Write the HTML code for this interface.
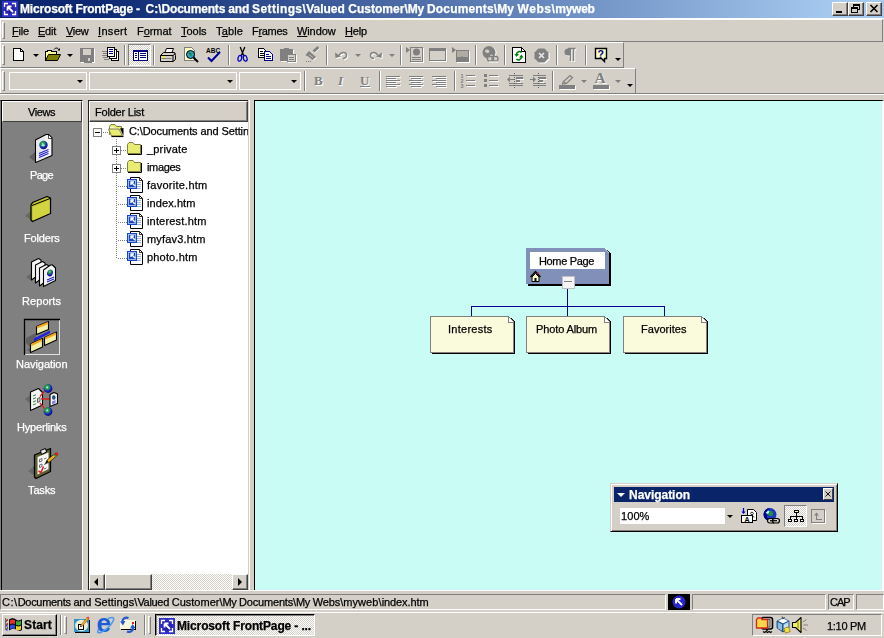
<!DOCTYPE html>
<html><head><meta charset="utf-8"><title>Microsoft FrontPage</title>
<style>
html,body{margin:0;padding:0;}
body{width:884px;height:638px;overflow:hidden;background:#d4d0c8;position:relative;font-family:"Liberation Sans",sans-serif;font-size:11px;color:#000;}
.a{position:absolute;box-sizing:border-box;}
.t{position:absolute;white-space:nowrap;line-height:14px;will-change:transform;-webkit-text-stroke:0.25px;}
svg{position:absolute;overflow:visible;}
#title{left:0;top:0;width:884px;height:18px;background:linear-gradient(to right,#0a246a 0%,#0e2a74 12%,#a6caf0 95%);}
.wb{position:absolute;top:2px;width:16px;height:14px;box-sizing:border-box;background:#d4d0c8;border:1px solid;border-color:#fff #404040 #404040 #fff;box-shadow:inset -1px -1px 0 #808080;}
.raised{border:1px solid;border-color:#fff #808080 #808080 #fff;}
.sunken{border:1px solid;border-color:#808080 #fff #fff #808080;}
.grip{position:absolute;width:3px;box-sizing:border-box;border:1px solid;border-color:#fff #808080 #808080 #fff;}
.sep{position:absolute;width:2px;box-sizing:border-box;border-left:1px solid #808080;border-right:1px solid #fff;}
.combo{position:absolute;box-sizing:border-box;border:1px solid #fff;background:#d4d0c8;}
.arr{position:absolute;width:0;height:0;border-left:3px solid transparent;border-right:3px solid transparent;border-top:3px solid #000;}
.arr.g{border-top-color:#808080;}
</style></head><body>
<!-- TITLE BAR -->
<div id="title" class="a"></div>
<svg style="left:2px;top:1px" width="16" height="16" viewBox="0 0 16 16"><rect x="0" y="0" width="16" height="16" fill="#3030c8"/><circle cx="8" cy="8" r="5" fill="#2424a8"/><path d="M2.500 6V2.500H6M10 2.500H13.500V6M13.500 10V13.500H10M6 13.500H2.500V10" fill="none" stroke="#fff" stroke-width="1.300"/><path d="M5.500 5.500h4M5.500 5.500v4M6 6L11 11" stroke="#fff" stroke-width="1.800" fill="none"/></svg>
<div class="a" style="left:0;top:18px;width:884px;height:1px;background:#fff"></div>
<div class="wb" style="left:832px"><div class="a" style="left:3px;top:8px;width:6px;height:2px;background:#000"></div></div>
<div class="wb" style="left:848px"><div class="a" style="left:4px;top:1px;width:7px;height:6px;border:1px solid #000;border-top-width:2px"></div><div class="a" style="left:2px;top:4px;width:7px;height:6px;border:1px solid #000;border-top-width:2px;background:#d4d0c8"></div></div>
<div class="wb" style="left:866px"><svg style="left:3px;top:2px" width="8" height="7" viewBox="0 0 8 7"><path d="M0.5 0L7.5 7M7.5 0L0.5 7" stroke="#000" stroke-width="1.6"/></svg></div>

<!-- MENU BAR -->
<div class="a raised" style="left:0;top:19px;width:883px;height:23px;"></div>
<div class="grip" style="left:2px;top:22px;height:17px"></div>

<!-- TOOLBAR 1 -->
<div class="a raised" style="left:0;top:42px;width:624px;height:26px;"></div>
<div class="grip" style="left:2px;top:45px;height:20px"></div>
<!-- new -->
<svg style="left:13px;top:48px" width="12" height="14" viewBox="0 0 12 14" shape-rendering="crispEdges"><path d="M0.5 0.5H7.500L10.500 3.500V12.500H0.5Z" fill="#fff" stroke="#000"/><path d="M7.500 0.5V3.500H10.500" fill="none" stroke="#000"/></svg>
<div class="arr" style="left:33px;top:54px"></div>
<!-- open -->
<svg style="left:45px;top:47px" width="17" height="15" viewBox="0 0 17 15"><path d="M9 2.5c1.5-2 4-2 5 0.5" fill="none" stroke="#000"/><path d="M12.5 3.5h2.5v-2.5z" fill="#000"/><path d="M0.5 13.5V4.5H2L3 3.5H6L7 4.5H11.5V7.5" fill="#ffff9c" stroke="#000" shape-rendering="crispEdges"/><path d="M0.5 13.5L3.5 7.5H15.5L12.5 13.5Z" fill="#808000" stroke="#000"/></svg>
<div class="arr" style="left:67px;top:54px"></div>
<!-- save (disabled) -->
<svg style="left:80px;top:48px" width="15" height="15" viewBox="0 0 15 15" shape-rendering="crispEdges"><rect x="1" y="1" width="14" height="14" fill="#fff"/><rect x="0" y="0" width="14" height="14" fill="#808080"/><rect x="3" y="1" width="8" height="6" fill="#d4d0c8"/><rect x="4" y="9" width="7" height="5" fill="#808080" stroke="#808080"/><rect x="8" y="10" width="2" height="3" fill="#d4d0c8"/></svg>
<!-- publish -->
<svg style="left:102px;top:47px" width="17" height="15" viewBox="0 0 17 15" shape-rendering="crispEdges"><path d="M0 4h5M1 6h4M0 8h5M1 10h5M2 12h5" stroke="#808080" fill="none"/><rect x="9.5" y="4.5" width="7" height="9" fill="#fff" stroke="#000"/><rect x="7.5" y="2.5" width="7" height="9" fill="#fff" stroke="#000"/><rect x="5.5" y="0.5" width="7" height="9" fill="#fff" stroke="#000"/><path d="M7 2.5h4M7 4.5h4M7 6.5h4" stroke="#0000a0"/></svg>
<div class="sep" style="left:124px;top:45px;height:20px"></div>
<!-- folder list (pressed) -->
<div class="a" style="left:128px;top:44px;width:23px;height:22px;border:1px solid;border-color:#808080 #fff #fff #808080;background-color:#fff;background-image:linear-gradient(45deg,#d4d0c8 25%,transparent 25%,transparent 75%,#d4d0c8 75%),linear-gradient(45deg,#d4d0c8 25%,transparent 25%,transparent 75%,#d4d0c8 75%);background-size:2px 2px;background-position:0 0,1px 1px;"></div>
<svg style="left:133px;top:50px" width="15" height="11" viewBox="0 0 15 11" shape-rendering="crispEdges"><rect x="0.5" y="0.5" width="14" height="10" fill="#fff" stroke="#000080"/><rect x="0" y="0" width="15" height="2" fill="#000080"/><path d="M2 3.5h2M2 5.5h2M2 7.5h2M7 3.5h6M7 5.5h6M7 7.5h6" stroke="#000080"/><path d="M5.5 2v8" stroke="#000080"/></svg>
<div class="sep" style="left:153px;top:45px;height:20px"></div>
<!-- print -->
<svg style="left:160px;top:48px" width="16" height="14" viewBox="0 0 16 14"><path d="M4.5 5.5L6.5 0.5H13.5L11.5 5.5Z" fill="#fff" stroke="#000"/><path d="M0.5 7.5L3.5 4.5H14.5L15.5 7.5V11.5L13 13.5H0.5Z" fill="#d4d0c8" stroke="#000"/><path d="M0.5 7.5H13L15.5 5.5M13 7.5V13.5" fill="none" stroke="#000"/><path d="M1.5 10.5h10" stroke="#808080"/><path d="M2 9h3" stroke="#ffff00"/></svg>
<!-- preview -->
<svg style="left:183px;top:47px" width="17" height="16" viewBox="0 0 17 16"><path d="M1.5 0.5H8.5L11.5 3.5V13.5H1.5Z" fill="#ffffcc" stroke="#808080" shape-rendering="crispEdges"/><circle cx="7.5" cy="7.5" r="4" fill="#30a0c0" stroke="#000"/><path d="M5 6c1-1 2-1 3 0s1 2 0 3" fill="#208040" stroke="none"/><path d="M10.5 10.5L15 15" stroke="#000" stroke-width="2"/></svg>
<!-- spell -->
<svg style="left:206px;top:47px" width="16" height="16" viewBox="0 0 16 16"><text x="0" y="6" font-family="Liberation Sans,sans-serif" font-size="6.5" font-weight="bold" fill="#000">ABC</text><path d="M2 10.5L5.5 14L14 5" fill="none" stroke="#0000a0" stroke-width="2"/></svg>
<div class="sep" style="left:228px;top:45px;height:20px"></div>
<!-- cut -->
<svg style="left:237px;top:47px" width="11" height="15" viewBox="0 0 11 15"><path d="M3.200 0L6.800 9M7.800 0L4.200 9" stroke="#000" stroke-width="1.300"/><ellipse cx="2.800" cy="11.300" rx="1.800" ry="2.900" fill="none" stroke="#0000c0" stroke-width="1.300" transform="rotate(15 2.800 11.300)"/><ellipse cx="8.200" cy="11.300" rx="1.800" ry="2.900" fill="none" stroke="#0000c0" stroke-width="1.300" transform="rotate(-15 8.200 11.300)"/></svg>
<!-- copy -->
<svg style="left:258px;top:48px" width="16" height="13" viewBox="0 0 16 13" shape-rendering="crispEdges"><path d="M0.500 0.500H5.500L8.500 3.500V9.500H0.500Z" fill="#fff" stroke="#000"/><path d="M2 3.500h3M2 5.500h5M2 7.500h5" stroke="#000"/><path d="M6.500 3.500H11.500L14.500 6.500V12.500H6.500Z" fill="#fff" stroke="#000080"/><path d="M8 6.500h3M8 8.500h5M8 10.500h5" stroke="#000080"/></svg>
<!-- paste disabled -->
<svg style="left:280px;top:48px" width="17" height="15" viewBox="0 0 17 15" shape-rendering="crispEdges"><rect x="1" y="2" width="13" height="12" fill="#fff"/><rect x="0" y="1" width="13" height="12" fill="#808080"/><rect x="4" y="0" width="5" height="3" fill="#808080"/><rect x="7.500" y="6.500" width="8" height="7" fill="#d4d0c8" stroke="#808080"/><path d="M9 9.500h5M9 11.500h5" stroke="#808080"/><path d="M8 14.500h9M16.500 7v8" stroke="#fff"/></svg>
<!-- format painter disabled -->
<svg style="left:304px;top:46px" width="17" height="17" viewBox="0 0 17 17"><path d="M10 6L15 1.500" stroke="#fff" stroke-width="3"/><path d="M9.500 5.500L14.500 1" stroke="#808080" stroke-width="3"/><path d="M5 5L12 11L8.500 14L1.500 9Z" fill="#808080"/><path d="M3 10L7 13M5 8.500L9 11.500" stroke="#d4d0c8" stroke-width="0.800"/><path d="M2 15.500h1M4 15.500h1M6 15.500h1" stroke="#808080"/><path d="M12.500 11.500L9 14.500" stroke="#fff"/></svg>
<div class="sep" style="left:326px;top:45px;height:20px"></div>
<!-- undo disabled -->
<svg style="left:335px;top:50px" width="14" height="10" viewBox="0 0 14 10"><path d="M4 5.500C6 1.500 11 1.500 11.500 5C12 7 10 8.500 8 8.500" fill="none" stroke="#fff" stroke-width="1.500" transform="translate(1,1)"/><path d="M0 2.500L0.500 8L6 6.500Z" fill="#fff" transform="translate(1,1)"/><path d="M4 5.500C6 1.500 11 1.500 11.500 5C12 7 10 8.500 8 8.500" fill="none" stroke="#808080" stroke-width="1.500"/><path d="M0 2.500L0.500 8L6 6.500Z" fill="#808080"/></svg>
<div class="arr g" style="left:355px;top:54px"></div>
<!-- redo disabled -->
<svg style="left:368px;top:50px" width="14" height="10" viewBox="0 0 14 10"><g transform="translate(14,0) scale(-1,1)"><path d="M4 5.500C6 1.500 11 1.500 11.500 5C12 7 10 8.500 8 8.500" fill="none" stroke="#fff" stroke-width="1.500" transform="translate(-1,1)"/><path d="M0 2.500L0.500 8L6 6.500Z" fill="#fff" transform="translate(-1,1)"/><path d="M4 5.500C6 1.500 11 1.500 11.500 5C12 7 10 8.500 8 8.500" fill="none" stroke="#808080" stroke-width="1.500"/><path d="M0 2.500L0.500 8L6 6.500Z" fill="#808080"/></g></svg>
<div class="arr g" style="left:389px;top:54px"></div>
<div class="sep" style="left:400px;top:45px;height:20px"></div>
<!-- component disabled -->
<svg style="left:406px;top:47px" width="18" height="16" viewBox="0 0 18 16" shape-rendering="crispEdges"><path d="M0 0v6l4-3z" fill="#808080" shape-rendering="auto"/><rect x="4.500" y="0.500" width="12" height="14" fill="#d4d0c8" stroke="#808080"/><path d="M5 15.500h13M17.500 1v15" stroke="#fff"/><circle cx="10.500" cy="5" r="3.500" fill="#808080" shape-rendering="auto"/><path d="M6 10.500h9M6 12.500h9" stroke="#808080"/></svg>
<!-- frame disabled -->
<svg style="left:429px;top:48px" width="18" height="14" viewBox="0 0 18 14" shape-rendering="crispEdges"><rect x="1.500" y="1.500" width="16" height="12" fill="none" stroke="#fff"/><rect x="0.500" y="0.500" width="16" height="12" fill="#d4d0c8" stroke="#808080"/><rect x="0" y="0" width="17" height="3" fill="#808080"/></svg>
<!-- picture disabled -->
<svg style="left:452px;top:47px" width="18" height="16" viewBox="0 0 18 16" shape-rendering="crispEdges"><path d="M0 0v6l4-3z" fill="#808080" shape-rendering="auto"/><rect x="5" y="4" width="13" height="12" fill="#fff"/><rect x="4" y="3" width="13" height="12" fill="#808080"/><rect x="5" y="4" width="11" height="6" fill="#b0aca4"/><path d="M5 14l5-5 3 3 2-1.500 2 2V15H5z" fill="#808080" shape-rendering="auto"/></svg>
<div class="sep" style="left:475px;top:45px;height:20px"></div>
<!-- hyperlink disabled -->
<svg style="left:482px;top:46px" width="17" height="17" viewBox="0 0 17 17"><circle cx="8" cy="7" r="6.500" fill="#fff"/><circle cx="7" cy="6.500" r="6.500" fill="#808080"/><path d="M3 4.500c1.500-1.500 3-1 4 0s0 2.500-1.500 2.500S3 6 3 4.500M8 9c1.500-1 3-0.500 3 1s-2 2-3 1z" fill="#d4d0c8"/><rect x="5.500" y="10.500" width="6" height="4.500" rx="2" fill="#d4d0c8" stroke="#808080" stroke-width="1.300"/><rect x="10" y="10.500" width="6" height="4.500" rx="2" fill="none" stroke="#808080" stroke-width="1.300"/><path d="M7 16h9" stroke="#fff"/></svg>
<div class="sep" style="left:504px;top:45px;height:20px"></div>
<!-- refresh -->
<svg style="left:512px;top:47px" width="14" height="16" viewBox="0 0 14 16"><path d="M0.500 0.500H9.500L13.500 4.500V15.500H0.500Z" fill="#fff" stroke="#000" shape-rendering="crispEdges"/><path d="M9.500 0.500V4.500H13.500" fill="none" stroke="#000" shape-rendering="crispEdges"/><path d="M9.500 5.500A3 3.500 0 0 0 4.500 7.500" fill="none" stroke="#008000" stroke-width="1.600"/><path d="M2.500 7L4.500 10L7 7Z" fill="#008000"/><path d="M4.500 12A3 3.500 0 0 0 9.500 10" fill="none" stroke="#008000" stroke-width="1.600"/><path d="M11.500 10.500L9.500 7.500L7 10.500Z" fill="#008000"/></svg>
<!-- stop disabled -->
<svg style="left:534px;top:48px" width="17" height="16" viewBox="0 0 17 16"><path d="M5.500 1.500H11.500L15.500 5.500V11.500L11.500 15.500H5.500L1.500 11.500V5.500Z" fill="#fff"/><path d="M4.500 0.500H10.500L14.500 4.500V10.500L10.500 14.500H4.500L0.500 10.500V4.500Z" fill="#808080"/><path d="M5 5l5 5M10 5l-5 5" stroke="#e8e8e8" stroke-width="1.600"/></svg>
<div class="sep" style="left:556px;top:45px;height:20px"></div>
<!-- paragraph disabled -->
<svg style="left:564px;top:48px" width="13" height="14" viewBox="0 0 13 14"><g transform="translate(1,1)"><path d="M7 0.500H4A3.500 3.500 0 0 0 4 7.500H7Z" fill="#fff"/><path d="M6.500 0v13M9.500 0v13M4 0.500h7.500" stroke="#fff" stroke-width="1.400" fill="none"/></g><path d="M7 0.500H4A3.500 3.500 0 0 0 4 7.500H7Z" fill="#808080"/><path d="M6.500 0v13M9.500 0v13M4 0.500h7.500" stroke="#808080" stroke-width="1.400" fill="none"/></svg>
<div class="sep" style="left:585px;top:45px;height:20px"></div>
<!-- help -->
<svg style="left:594px;top:47px" width="14" height="16" viewBox="0 0 14 16"><path d="M1.500 1.500H12.500V11.500H10.500V14.500L7.500 11.500H1.500Z" fill="#ffffcc" stroke="#000" stroke-width="1.400"/><text x="3.500" y="10.500" font-family="Liberation Sans,sans-serif" font-size="10.500" font-weight="bold" fill="#000080">?</text></svg>
<div class="arr" style="left:615px;top:58px"></div>

<!-- TOOLBAR 2 -->
<div class="a raised" style="left:0;top:68px;width:636px;height:26px;"></div>
<div class="grip" style="left:2px;top:71px;height:20px"></div>
<div class="combo" style="left:9px;top:72px;width:78px;height:18px"></div><div class="arr" style="left:77px;top:80px"></div>
<div class="combo" style="left:89px;top:72px;width:148px;height:18px"></div><div class="arr" style="left:227px;top:80px"></div>
<div class="combo" style="left:239px;top:72px;width:62px;height:18px"></div><div class="arr" style="left:291px;top:80px"></div>
<div class="sep" style="left:304px;top:71px;height:20px"></div>
<svg style="left:312px;top:72px" width="64" height="18" viewBox="0 0 64 18">
<g font-family="Liberation Serif,serif" font-size="13" font-weight="bold">
<text x="3" y="14" fill="#fff">B</text><text x="2" y="13" fill="#808080">B</text>
<text x="27" y="14" fill="#fff" font-style="italic">I</text><text x="26" y="13" fill="#808080" font-style="italic">I</text>
<text x="49" y="14" fill="#fff">U</text><text x="48" y="13" fill="#808080">U</text>
</g><path d="M49 15.500h10" stroke="#fff"/><path d="M48 14.500h10" stroke="#808080"/></svg>
<div class="sep" style="left:379px;top:71px;height:20px"></div>
<svg style="left:386px;top:75px" width="62" height="13" viewBox="0 0 62 13" shape-rendering="crispEdges">
<path d="M1 2.500h14M1 4.500h10M1 6.500h14M1 8.500h10M1 10.500h14M1 12.500h10" stroke="#fff" transform="translate(0,0)"/>
<path d="M0 1.500h14M0 3.500h10M0 5.500h14M0 7.500h10M0 9.500h14M0 11.500h10" stroke="#808080"/>
<path d="M24 2.500h14M26 4.500h10M24 6.500h14M26 8.500h10M24 10.500h14M26 12.500h10" stroke="#fff"/>
<path d="M23 1.500h14M25 3.500h10M23 5.500h14M25 7.500h10M23 9.500h14M25 11.500h10" stroke="#808080"/>
<path d="M47 2.500h14M51 4.500h10M47 6.500h14M51 8.500h10M47 10.500h14M51 12.500h10" stroke="#fff"/>
<path d="M46 1.500h14M50 3.500h10M46 5.500h14M50 7.500h10M46 9.500h14M50 11.500h10" stroke="#808080"/>
</svg>
<div class="sep" style="left:454px;top:71px;height:20px"></div>
<!-- numbered list -->
<svg style="left:460px;top:73px" width="16" height="14" viewBox="0 0 16 14"><g font-family="Liberation Sans,sans-serif" font-size="5.500" font-weight="bold" fill="#808080"><text x="0.500" y="4.500">1</text><text x="0.500" y="9.500">2</text><text x="0.500" y="14.500">3</text></g><path d="M7 3.500h9M7 8.500h9M7 13.500h9" stroke="#fff" shape-rendering="crispEdges"/><path d="M6 2.500h9M6 7.500h9M6 12.500h9" stroke="#808080" shape-rendering="crispEdges"/></svg>
<!-- bullets -->
<svg style="left:484px;top:73px" width="16" height="14" viewBox="0 0 16 14" shape-rendering="crispEdges"><path d="M6 3.500h9M6 8.500h9M6 13.500h9" stroke="#fff"/><path d="M5 2.500h9M5 7.500h9M5 12.500h9" stroke="#808080"/><rect x="0" y="1" width="3" height="3" fill="#808080"/><rect x="0" y="6" width="3" height="3" fill="#808080"/><rect x="0" y="11" width="3" height="3" fill="#808080"/></svg>
<!-- outdent -->
<svg style="left:507px;top:72px" width="17" height="17" viewBox="0 0 17 17"><g shape-rendering="crispEdges"><path d="M2 3.500h14M2 11.500h14M2 13.500h14" stroke="#808080"/><path d="M9 6h7M9 9h4" stroke="#808080" stroke-width="2"/><path d="M10 7.500h7M10 10.500h4" stroke="#fff"/><path d="M7.500 1v16" stroke="#606060" stroke-dasharray="1 1"/><path d="M2 7.500h5" stroke="#808080"/></g><path d="M0 7.500L3 4.500V10.500Z" fill="#808080"/></svg>
<!-- indent -->
<svg style="left:530px;top:72px" width="17" height="17" viewBox="0 0 17 17"><g shape-rendering="crispEdges"><path d="M3 3.500h13M3 11.500h13M3 13.500h13" stroke="#808080"/><path d="M9 6h7M9 9h4" stroke="#808080" stroke-width="2"/><path d="M10 7.500h7M10 10.500h4" stroke="#fff"/><path d="M8.500 1v16" stroke="#606060" stroke-dasharray="1 1"/><path d="M0 7.500h4" stroke="#808080"/></g><path d="M6 7.500L3 4.500V10.500Z" fill="#808080"/></svg>
<div class="sep" style="left:552px;top:71px;height:20px"></div>
<!-- highlight -->
<svg style="left:559px;top:73px" width="17" height="17" viewBox="0 0 17 17"><rect x="1" y="13" width="16" height="4" fill="#fff"/><rect x="0" y="12" width="16" height="4" fill="#808080"/><path d="M4 9L11 2.500L13.500 4.500L7.500 10.500L3.500 11Z" fill="#d4d0c8" stroke="#808080" stroke-width="1.200"/><path d="M5 9.500L7 10.500" stroke="#808080" stroke-width="1.500"/></svg>
<div class="arr g" style="left:581px;top:80px"></div>
<!-- font color -->
<svg style="left:593px;top:71px" width="17" height="19" viewBox="0 0 17 19"><rect x="1" y="15" width="16" height="4" fill="#fff"/><rect x="0" y="14" width="16" height="4" fill="#808080"/><text x="2.500" y="13" font-family="Liberation Serif,serif" font-size="15.500" font-weight="bold" fill="#fff">A</text><text x="1.500" y="12" font-family="Liberation Serif,serif" font-size="15.500" font-weight="bold" fill="#808080">A</text></svg>
<div class="arr g" style="left:615px;top:80px"></div>
<div class="arr" style="left:627px;top:84px"></div>

<div class="a" style="left:0;top:93px;width:884px;height:1px;background:#808080"></div>
<div class="a" style="left:0;top:94px;width:884px;height:1px;background:#fff"></div>

<!-- VIEWS PANE -->
<div class="a" style="left:0;top:100px;width:83px;height:490px;background:#808080;border-left:1px solid #808080;border-top:1px solid #000;border-right:1px solid #fff"></div>
<div class="a" style="left:1px;top:100px;width:1px;height:490px;background:#000"></div>
<div class="a" style="left:2px;top:101px;width:80px;height:21px;background:#d4d0c8;border:1px solid;border-color:#fff #404040 #404040 #fff"></div>
<svg style="left:0;top:0" width="84" height="600" viewBox="0 0 84 600">
<defs>
<radialGradient id="gl" cx="40%" cy="35%" r="70%"><stop offset="0" stop-color="#a0f0e0"/><stop offset="0.2" stop-color="#30a858"/><stop offset="0.45" stop-color="#208048"/><stop offset="0.55" stop-color="#2038c8"/><stop offset="1" stop-color="#000070"/></radialGradient>
</defs>
<!-- Page -->
<path d="M29 157L35 152V162Z" fill="#606060"/>
<path d="M35.500 140L46 134.500H48.500L52 138V155.500L35.500 162.500Z" fill="#f4f4f4" stroke="#000" stroke-width="1.100" stroke-linejoin="round"/>
<path d="M36.500 141L45 136.500V158L36.500 161.500Z" fill="#e0e0e0" opacity="0.6"/>
<path d="M48.500 135V138.500H52" fill="#fff" stroke="#000" stroke-width="0.700"/>
<circle cx="43.500" cy="145" r="4.200" fill="url(#gl)"/>
<path d="M41 145.500l2-1.500 2 1-1 1.500z" fill="#b0f0f0"/>
<path d="M39 153.500L48.500 149.500M39 155.500L48.500 151.500M39 157.500L48.500 153.500" stroke="#2020d0" stroke-width="1.100"/>
<!-- Folders -->
<path d="M25 216L31 211V220Z" fill="#686868"/>
<path d="M31 205L32.500 202.500L47 196.500L50.500 198V213.500L32.500 221.500L31 220Z" fill="#c4c430" stroke="#000" stroke-width="1.300" stroke-linejoin="round"/>
<path d="M32 205.500L50 198.500" stroke="#000" stroke-width="1"/>
<path d="M33 207L49.500 200V213L33 220Z" fill="#d2d440"/>
<!-- Reports -->
<path d="M26 277L31.500 273V281Z" fill="#686868"/>
<g stroke="#000" stroke-width="1.100" stroke-linejoin="round" fill="#f4f4f4">
<path d="M31.500 262L38.500 258.500L41 260V273L31.500 280Z"/>
<path d="M35.500 265L42.500 261.500L45 263V276L35.500 283Z"/>
<path d="M39.500 268L46.500 264.500L49 266V279L39.500 286Z"/>
<path d="M43.500 270L50.500 265H52.500L55.500 268V280.500L43.500 286.500Z"/>
</g>
<ellipse cx="50" cy="273" rx="2.800" ry="3.500" fill="url(#gl)" transform="rotate(20 50 273)"/>
<path d="M47 280L54 277M47 282L54 279" stroke="#2020d0" stroke-width="1.100"/>
<!-- Navigation -->
<rect x="24.500" y="319.500" width="35" height="35" fill="none" stroke="#e0e0e0"/>
<path d="M24.500 355V319.500H60" fill="none" stroke="#000" stroke-width="1.300"/>
<path d="M26 338L36 333V343L30 347L26 343Z" fill="#606060"/>
<path d="M27 350L30.500 347V352Z" fill="#606060"/>
<path d="M34 338.500L50 330.500V333L34 341.500Z" fill="#2020e0"/>
<g stroke="#000" stroke-width="1.100" stroke-linejoin="round">
<path d="M36.500 326.500L48.500 321.500V329.500L36.500 334.500Z" fill="#f0f0a8"/>
<path d="M44.500 337.500L56.500 332V340L44.500 345.500Z" fill="#f0f0a8"/>
<path d="M30.500 344L42.500 338.500V347L30.500 352.500Z" fill="#f0f0a8"/>
</g>
<path d="M37 327.500L48 323M45 338.500L56 333.500M31 345L42 340" stroke="#f0a818" stroke-width="2"/>
<!-- Hyperlinks -->
<path d="M25 399L30.500 395V404Z" fill="#686868"/>
<path d="M30.500 392L38.500 388.500L42.500 392.500V405L30.500 410.500Z" fill="#f4f4f4" stroke="#000" stroke-width="1.100" stroke-linejoin="round"/>
<path d="M33 396l3-1.300M33 399l3-1.300M33 402l3-1.300M33 405l3-1.300" stroke="#308040" stroke-width="1"/>
<path d="M37.500 398.500l2.500-1v4l-2.500 1z" fill="#d0d0d0" stroke="#404040" stroke-width="0.800"/>
<path d="M41 399h9M40 396.500L44.500 391M40 403L44.500 408.500" stroke="#e02020" stroke-width="1.300"/>
<circle cx="48" cy="388.500" r="4.400" fill="url(#gl)"/><circle cx="48" cy="411.500" r="4.400" fill="url(#gl)"/>
<path d="M46 388l1.500-1.500 1 2z M46 411l1.500-1.500 1 2z" fill="#b0f0f0"/>
<path d="M50 394.500L54 392.500L57.500 394V403.500L50 406.500Z" fill="#f4f4f4" stroke="#000" stroke-width="1.100" stroke-linejoin="round"/>
<ellipse cx="53.800" cy="397.500" rx="1.800" ry="2.300" fill="#205080"/><path d="M52 401.500l3.500-1.500v3l-3.500 1.500z" fill="#8080e0"/>
<!-- Tasks -->
<path d="M28 471L34.500 466V476Z" fill="#686868"/>
<path d="M34.500 455L50.500 448.500V471.500L36 478.500L34.500 477Z" fill="#606030" stroke="#000" stroke-width="1.300" stroke-linejoin="round"/>
<path d="M37.500 457L48.500 452.500V469L37.500 474.500Z" fill="#f8f8f8"/>
<path d="M40.500 450.500L45.500 448.500L46.500 452L41.500 454.500Z" fill="#e8e8e8" stroke="#000" stroke-width="1"/>
<path d="M39.500 459.500l2.500-1v2.500l-2.500 1zM39.500 465l2.500-1v2.500l-2.500 1z" fill="none" stroke="#606060" stroke-width="0.900"/>
<path d="M44 459l2.500-1M44 464.500l2.500-1M44 469l2.500-1" stroke="#606060" stroke-width="0.900"/>
<path d="M38.500 471L41 472.500L43.500 466.500" fill="none" stroke="#e02020" stroke-width="1.600"/>
<path d="M45.500 463.500L47 460L55 453.500L57.500 455L49 462.500Z" fill="#f0b020" stroke="#000" stroke-width="0.600"/>
<path d="M53 455L55 453.500L57.500 455L55.500 457Z" fill="#30a030"/>
<circle cx="56.500" cy="454" r="1.800" fill="#d02020"/>
<path d="M45.500 463.500L47 460L48.500 462Z" fill="#000"/>
</svg>


<!-- FOLDER LIST -->
<div class="a" style="left:83px;top:100px;width:5px;height:490px;background:#d4d0c8"></div>
<div class="a" style="left:88px;top:100px;width:162px;height:490px;background:#fff;border-left:1px solid #202020;border-top:1px solid #202020;"></div>
<div class="a" style="left:89px;top:101px;width:159px;height:21px;background:#d4d0c8;border:1px solid;border-color:#fff #404040 #404040 #fff;box-shadow:inset -1px -1px 0 #808080"></div>
<div class="a" style="left:248px;top:100px;width:2px;height:491px;background:#d4d0c8;border-right:1px solid #fff"></div>
<div class="a" style="left:0;top:590px;width:884px;height:1px;background:#fff"></div>
<svg style="left:0;top:0" width="260" height="600" viewBox="0 0 260 600">
<defs>


</defs>
<g shape-rendering="crispEdges">
<!-- dotted lines -->
<path d="M102.500 132.500H108" stroke="#808080" stroke-dasharray="1 1"/>
<path d="M116.500 139V259" stroke="#808080" stroke-dasharray="1 1"/>
<path d="M121 150.500h6M121 168.500h6M118 186.500h9M118 204.500h9M118 222.500h9M118 240.500h9M118 258.500h9" stroke="#808080" stroke-dasharray="1 1"/>
<!-- boxes -->
<rect x="93.500" y="128.500" width="8" height="8" fill="#fff" stroke="#808080"/><path d="M95 132.500h5" stroke="#000"/>
<rect x="112.500" y="146.500" width="8" height="8" fill="#fff" stroke="#808080"/><path d="M114 150.500h5M116.500 148v5" stroke="#000"/>
<rect x="112.500" y="164.500" width="8" height="8" fill="#fff" stroke="#808080"/><path d="M114 168.500h5M116.500 166v5" stroke="#000"/>
</g>
<!-- root open folder -->
<g transform="translate(108,123.500)"><path d="M1.500 3L3 1H7L8.500 3H13.500V6" fill="#e8ec70" stroke="#808040"/><path d="M1.500 3V11.500" stroke="#808040"/><path d="M0.500 5.500H11L14.500 12.500H3.500Z" fill="#e8ec70" stroke="#808040" stroke-width="1"/><path d="M12 5L15.500 12.500V4.500Z" fill="#000"/><path d="M3.500 13H15.500" stroke="#000" stroke-width="1.200"/></g>
<g transform="translate(127,141)"><path d="M0.500 3.500L2 1.500H6L7.500 3.500H13.500V12.500H0.500Z" fill="#e8ec70" stroke="#808040" stroke-width="1"/><path d="M14.500 4V13.500H1" fill="none" stroke="#000" stroke-width="1"/></g><g transform="translate(127,159)"><path d="M0.500 3.500L2 1.500H6L7.500 3.500H13.500V12.500H0.500Z" fill="#e8ec70" stroke="#808040" stroke-width="1"/><path d="M14.500 4V13.500H1" fill="none" stroke="#000" stroke-width="1"/></g>
<g transform="translate(127,177)"><path d="M3.500 0.500H12.500L15.500 3.500V15.500H3.500Z" fill="#fff" stroke="#000" stroke-width="1"/><path d="M12.500 0.500V3.500H15.500" fill="none" stroke="#000" stroke-width="0.800"/><path d="M10 5.500h4M10 7.500h4M10 9.500h4M10 11.500h4" stroke="#a0b8e0" stroke-width="1"/><rect x="0" y="2" width="10" height="10" fill="#1848c0"/><rect x="1.500" y="3.500" width="7" height="7" fill="none" stroke="#c0d0f8" stroke-width="0.800"/><path d="M3.500 5h3.500M4 4.500v3.500M4.500 5.500L8 9" stroke="#fff" stroke-width="1.400" fill="none"/></g><g transform="translate(127,195)"><path d="M3.500 0.500H12.500L15.500 3.500V15.500H3.500Z" fill="#fff" stroke="#000" stroke-width="1"/><path d="M12.500 0.500V3.500H15.500" fill="none" stroke="#000" stroke-width="0.800"/><path d="M10 5.500h4M10 7.500h4M10 9.500h4M10 11.500h4" stroke="#a0b8e0" stroke-width="1"/><rect x="0" y="2" width="10" height="10" fill="#1848c0"/><rect x="1.500" y="3.500" width="7" height="7" fill="none" stroke="#c0d0f8" stroke-width="0.800"/><path d="M3.500 5h3.500M4 4.500v3.500M4.500 5.500L8 9" stroke="#fff" stroke-width="1.400" fill="none"/></g><g transform="translate(127,213)"><path d="M3.500 0.500H12.500L15.500 3.500V15.500H3.500Z" fill="#fff" stroke="#000" stroke-width="1"/><path d="M12.500 0.500V3.500H15.500" fill="none" stroke="#000" stroke-width="0.800"/><path d="M10 5.500h4M10 7.500h4M10 9.500h4M10 11.500h4" stroke="#a0b8e0" stroke-width="1"/><rect x="0" y="2" width="10" height="10" fill="#1848c0"/><rect x="1.500" y="3.500" width="7" height="7" fill="none" stroke="#c0d0f8" stroke-width="0.800"/><path d="M3.500 5h3.500M4 4.500v3.500M4.500 5.500L8 9" stroke="#fff" stroke-width="1.400" fill="none"/></g><g transform="translate(127,231)"><path d="M3.500 0.500H12.500L15.500 3.500V15.500H3.500Z" fill="#fff" stroke="#000" stroke-width="1"/><path d="M12.500 0.500V3.500H15.500" fill="none" stroke="#000" stroke-width="0.800"/><path d="M10 5.500h4M10 7.500h4M10 9.500h4M10 11.500h4" stroke="#a0b8e0" stroke-width="1"/><rect x="0" y="2" width="10" height="10" fill="#1848c0"/><rect x="1.500" y="3.500" width="7" height="7" fill="none" stroke="#c0d0f8" stroke-width="0.800"/><path d="M3.500 5h3.500M4 4.500v3.500M4.500 5.500L8 9" stroke="#fff" stroke-width="1.400" fill="none"/></g><g transform="translate(127,249)"><path d="M3.500 0.500H12.500L15.500 3.500V15.500H3.500Z" fill="#fff" stroke="#000" stroke-width="1"/><path d="M12.500 0.500V3.500H15.500" fill="none" stroke="#000" stroke-width="0.800"/><path d="M10 5.500h4M10 7.500h4M10 9.500h4M10 11.500h4" stroke="#a0b8e0" stroke-width="1"/><rect x="0" y="2" width="10" height="10" fill="#1848c0"/><rect x="1.500" y="3.500" width="7" height="7" fill="none" stroke="#c0d0f8" stroke-width="0.800"/><path d="M3.500 5h3.500M4 4.500v3.500M4.500 5.500L8 9" stroke="#fff" stroke-width="1.400" fill="none"/></g>
</svg>
<div class="a" style="left:129px;top:124px;width:119px;height:14px;overflow:hidden"><span class="t" style="left:0;top:0;font-size:11px;letter-spacing:-0.1px">C:&#92;Documents and Settings&#92;Valued Customer&#92;My Documents&#92;My Webs&#92;myweb</span></div>
<!-- h scrollbar -->
<div class="a" style="left:89px;top:574px;width:159px;height:16px;background-color:#fff;background-image:linear-gradient(45deg,#d4d0c8 25%,transparent 25%,transparent 75%,#d4d0c8 75%),linear-gradient(45deg,#d4d0c8 25%,transparent 25%,transparent 75%,#d4d0c8 75%);background-size:2px 2px;background-position:0 0,1px 1px;"></div>
<div class="a" style="left:89px;top:574px;width:16px;height:16px;background:#d4d0c8;border:1px solid;border-color:#fff #404040 #404040 #fff;box-shadow:inset -1px -1px 0 #808080"><div class="a" style="left:4px;top:3px;width:0;height:0;border-top:4px solid transparent;border-bottom:4px solid transparent;border-right:4px solid #000"></div></div>
<div class="a" style="left:105px;top:574px;width:47px;height:16px;background:#d4d0c8;border:1px solid;border-color:#fff #404040 #404040 #fff;box-shadow:inset -1px -1px 0 #808080"></div>
<div class="a" style="left:232px;top:574px;width:16px;height:16px;background:#d4d0c8;border:1px solid;border-color:#fff #404040 #404040 #fff;box-shadow:inset -1px -1px 0 #808080"><div class="a" style="left:5px;top:3px;width:0;height:0;border-top:4px solid transparent;border-bottom:4px solid transparent;border-left:4px solid #000"></div></div>


<!-- NAV PANE -->
<div class="a" id="nav" style="left:254px;top:100px;width:630px;height:490px;background:#c9fcf5;border-left:1px solid #000;border-top:1px solid #000;border-right:2px solid #fff;"></div>
<svg style="left:0;top:0" width="884" height="600" viewBox="0 0 884 600">
<g shape-rendering="crispEdges">
<!-- connector lines -->
<path d="M567.500 288V316M471.500 316V306.500H664.500V316" fill="none" stroke="#000090" stroke-width="1.400"/>
<!-- Home page box -->
<path d="M528 250H607L611 254V286H528Z" fill="#000"/>
<path d="M526 248H605L609 253V284H526Z" fill="#8090b8"/>
<rect x="530" y="252" width="75" height="17" fill="#fff"/>
<!-- child boxes -->
<g><path d="M432 318H511L515 322V354H432Z" fill="#000"/><path d="M430.500 316.500H508L513.500 322V352.500H430.500Z" fill="#fafadc" stroke="#808080"/><path d="M508 316.500V322H513.500" fill="#fff" stroke="#808080"/></g>
<g transform="translate(96,0)"><path d="M432 318H511L515 322V354H432Z" fill="#000"/><path d="M430.500 316.500H508L513.500 322V352.500H430.500Z" fill="#fafadc" stroke="#808080"/><path d="M508 316.500V322H513.500" fill="#fff" stroke="#808080"/></g><g transform="translate(193,0)"><path d="M432 318H511L515 322V354H432Z" fill="#000"/><path d="M430.500 316.500H508L513.500 322V352.500H430.500Z" fill="#fafadc" stroke="#808080"/><path d="M508 316.500V322H513.500" fill="#fff" stroke="#808080"/></g>
<!-- collapse box -->
<rect x="563" y="277" width="12" height="12" fill="#404040"/>
<rect x="562" y="276" width="12" height="12" fill="#f4f4f4" stroke="#c0c0c0" stroke-width="1"/>
<path d="M564 281.500h8" stroke="#808080" stroke-width="1"/>
</g>
<path d="M605 248L609 253" stroke="#fff" stroke-width="0.600"/>
<!-- house icon -->
<path d="M530.500 277L535.500 271.500L540.500 277" fill="none" stroke="#000" stroke-width="1.300"/>
<path d="M532 277V281.500H539V277L535.500 273.500Z" fill="#fff8c0" stroke="#000" stroke-width="1"/>
<rect x="534.500" y="278" width="2" height="3.500" fill="#000"/>
<path d="M538 272v2" stroke="#e02020" stroke-width="1.300"/>
</svg>
<!-- floating Navigation toolbar -->
<div class="a" style="left:610px;top:483px;width:228px;height:49px;background:#d4d0c8;border:1px solid;border-color:#d4d0c8 #000 #000 #d4d0c8;box-shadow:inset 1px 1px 0 #fff,inset -1px -1px 0 #808080"></div>
<div class="a" style="left:614px;top:487px;width:220px;height:15px;background:#0a246a"></div>
<div class="a" style="left:617px;top:493px;width:0;height:0;border-left:4px solid transparent;border-right:4px solid transparent;border-top:4px solid #fff"></div>
<div class="a" style="left:823px;top:488px;width:10px;height:12px;background:#d4d0c8;border:1px solid;border-color:#fff #404040 #404040 #fff"><svg style="left:1px;top:2px" width="6" height="6" viewBox="0 0 6 6"><path d="M0.500 0.500L5.500 5.500M5.500 0.500L0.500 5.500" stroke="#000" stroke-width="0.900"/></svg></div>
<div class="a" style="left:620px;top:508px;width:105px;height:16px;background:#fff"></div>
<div class="a" style="left:725px;top:508px;width:10px;height:16px;background:#d4d0c8"></div>
<div class="arr" style="left:727px;top:515px"></div>
<!-- icon1 -->
<svg style="left:741px;top:508px" width="17" height="16" viewBox="0 0 17 16"><path d="M6.500 1.500H12.500L15.500 4.500V12.500H6.500Z" fill="#fff" stroke="#000"/><circle cx="11" cy="5.500" r="1.300" fill="none" stroke="#000" stroke-width="0.800"/><path d="M9 9.500c0-2 4-2 4 0" fill="none" stroke="#000" stroke-width="0.800"/><rect x="0.500" y="7.500" width="11" height="7" fill="#fff" stroke="#000"/><text x="3.500" y="14" font-family="Liberation Sans,sans-serif" font-size="7" font-weight="bold" fill="#000">A</text><path d="M2.500 0v5" stroke="#0000c0" stroke-width="1.200"/><path d="M0.500 3.500L2.500 6L4.500 3.500Z" fill="#0000c0"/></svg>
<!-- icon2 globe link -->
<svg style="left:763px;top:507px" width="18" height="18" viewBox="0 0 18 18"><defs><radialGradient id="gl2" cx="40%" cy="35%" r="70%"><stop offset="0" stop-color="#40c060"/><stop offset="0.450" stop-color="#208048"/><stop offset="0.550" stop-color="#2040d0"/><stop offset="1" stop-color="#000080"/></radialGradient></defs><circle cx="7" cy="7.500" r="6.500" fill="#1838c0"/><path d="M7 1A6.500 6.500 0 0 0 7 14A8 8 0 0 1 7 1Z" fill="#000080"/><path d="M5 4.500c2-1.500 4.500-0.500 5 1.500s-1 3.500-3 3-3-3-2-4.500z" fill="#209040"/><path d="M2.500 6l2.500-2.500 1.500 1-1.500 2.500z" fill="#c0f8f8"/><rect x="4.500" y="11.500" width="7" height="4.500" rx="2.200" fill="#d4d0c8" stroke="#000" stroke-width="1.200"/><rect x="9.500" y="11.500" width="7" height="4.500" rx="2.200" fill="#d4d0c8" stroke="#000" stroke-width="1.200"/><path d="M7 13.700h7" stroke="#000" stroke-width="1.200"/></svg>
<!-- icon3 pressed -->
<div class="a" style="left:784px;top:505px;width:23px;height:22px;border:1px solid;border-color:#808080 #fff #fff #808080;background-color:#fff;background-image:linear-gradient(45deg,#d4d0c8 25%,transparent 25%,transparent 75%,#d4d0c8 75%),linear-gradient(45deg,#d4d0c8 25%,transparent 25%,transparent 75%,#d4d0c8 75%);background-size:2px 2px;background-position:0 0,1px 1px;"></div>
<svg style="left:788px;top:510px" width="16" height="13" viewBox="0 0 16 13" shape-rendering="crispEdges"><rect x="6.500" y="0.500" width="4" height="2" fill="#ffff80" stroke="#000"/><path d="M8.500 3v3M2.500 9V6.500H14.500V9M8.500 6v3" fill="none" stroke="#000"/><rect x="0.500" y="9.500" width="3" height="2" fill="#fff" stroke="#000"/><rect x="6.500" y="9.500" width="3" height="2" fill="#fff" stroke="#000"/><rect x="12.500" y="9.500" width="3" height="2" fill="#fff" stroke="#000"/></svg>
<!-- icon4 disabled -->
<svg style="left:811px;top:509px" width="15" height="15" viewBox="0 0 15 15" shape-rendering="crispEdges"><rect x="1.500" y="1.500" width="13" height="13" fill="none" stroke="#fff"/><rect x="0.500" y="0.500" width="13" height="13" fill="#d4d0c8" stroke="#808080"/><path d="M5.500 4v6.500H11" fill="none" stroke="#808080"/><path d="M3 6.500L5.500 3.500L8 6.500Z" fill="#808080" shape-rendering="auto"/></svg>


<!-- STATUS BAR -->
<div class="a" style="left:0;top:591px;width:884px;height:21px;background:#d4d0c8"></div>
<div class="a sunken" style="left:0;top:594px;width:666px;height:16px"></div>
<div class="a" style="left:668px;top:594px;width:22px;height:16px;background:#000"></div>
<svg style="left:672px;top:595px" width="14" height="14" viewBox="0 0 14 14"><circle cx="7" cy="7" r="6.500" fill="#2828c8"/><path d="M4 4h4.500M4 4v4.500M4.500 4.500L10 10" stroke="#fff" stroke-width="1.800" fill="none"/></svg>
<div class="a sunken" style="left:692px;top:594px;width:134px;height:16px"></div>
<div class="a sunken" style="left:828px;top:594px;width:26px;height:16px"></div>
<div class="a sunken" style="left:856px;top:594px;width:28px;height:16px"></div>

<!-- TASKBAR -->
<div class="a" style="left:0;top:612px;width:884px;height:26px;background:#d4d0c8;border-top:1px solid #fff"></div>
<!-- start button -->
<div class="a" style="left:2px;top:614px;width:55px;height:22px;background:#d4d0c8;border:1px solid;border-color:#fff #000 #000 #fff;box-shadow:inset -1px -1px 0 #808080"></div>
<svg style="left:5px;top:617px" width="18" height="16" viewBox="0 0 18 16"><path d="M0 2h1M0 4h2M0 6h1M0 8h2M0 10h1M0 12h2M2 3h1M2 7h1M2 11h1" stroke="#000" stroke-width="1"/><path d="M1 3h2M1 7h2" stroke="#e02020"/><path d="M1 9h2M1 13h2" stroke="#2040e0"/><path d="M4 2.500C7 0.500 9 1 11 2.500S15 3.500 17 2V13C15 14.500 13 14 11 12.500S7 11.500 4 13.500Z" fill="#000"/><path d="M5 3.500C7 2 8.500 2.200 10 3.200V7.200C8.500 6.200 7 6 5 7.500Z" fill="#e83020"/><path d="M11 3.800C12.500 4.800 14.500 4.500 16 3.500V7.500C14.500 8.500 12.500 8.800 11 7.800Z" fill="#30b030"/><path d="M5 8.500C7 7 8.500 7.200 10 8.200V12.200C8.500 11.200 7 11 5 12.500Z" fill="#2848e0"/><path d="M11 8.800C12.500 9.800 14.500 9.500 16 8.500V12.500C14.500 13.500 12.500 13.800 11 12.800Z" fill="#f0d020"/></svg>
<div class="sep" style="left:60px;top:615px;height:20px"></div>
<div class="grip" style="left:64px;top:616px;height:18px"></div>
<!-- quick launch -->
<svg style="left:74px;top:616px" width="17" height="18" viewBox="0 0 17 18"><rect x="1" y="4" width="15" height="13" fill="#000"/><rect x="0" y="3" width="15" height="13" fill="#3494c8"/><ellipse cx="7.500" cy="9.500" rx="6.500" ry="5.800" fill="#f0ecd0"/><rect x="4.500" y="8.500" width="5" height="5" fill="#fff" stroke="#000"/><path d="M6.500 9.500L13 1.500L14.500 3L8 10.500Z" fill="#f0b030" stroke="#a05010" stroke-width="0.600"/><path d="M13 1.500L14 0.500L15.500 2L14.500 3Z" fill="#e03020"/><path d="M6 11L6.500 9.500L8 10.500Z" fill="#000"/></svg>
<svg style="left:96px;top:615px" width="19" height="19" viewBox="0 0 19 19"><text x="0.500" y="17" font-family="Liberation Sans,sans-serif" font-size="26" font-weight="bold" fill="#1c5cd8">e</text><path d="M2.500 14C-1 21.500 9 16.500 14 10.500S19.500 0.500 12 3.500" fill="none" stroke="#4c98f0" stroke-width="1.600"/></svg>
<svg style="left:119px;top:616px" width="18" height="18" viewBox="0 0 18 18"><rect x="2" y="5" width="15" height="9" fill="#000"/><rect x="1" y="4" width="15" height="9" fill="#f8f8dc"/><rect x="13" y="6" width="2" height="2" fill="#e02020"/><path d="M9.500 2C6 0.500 3 3 3.500 6.500" fill="none" stroke="#2858d0" stroke-width="2.200"/><path d="M1 5.500L4 9.500L6.500 5Z" fill="#2858d0"/><path d="M8 15.500C11.500 17 14.500 14.500 14 11" fill="none" stroke="#2858d0" stroke-width="2.200"/><path d="M16.500 12L13.500 8L11 12.500Z" fill="#2858d0"/></svg>
<div class="sep" style="left:144px;top:615px;height:20px"></div>
<div class="grip" style="left:148px;top:616px;height:18px"></div>
<!-- task button pressed -->
<div class="a" style="left:155px;top:614px;width:160px;height:22px;border:1px solid;border-color:#000 #fff #fff #000;box-shadow:inset 1px 1px 0 #808080;background-color:#fff;background-image:linear-gradient(45deg,#d4d0c8 25%,transparent 25%,transparent 75%,#d4d0c8 75%),linear-gradient(45deg,#d4d0c8 25%,transparent 25%,transparent 75%,#d4d0c8 75%);background-size:2px 2px;background-position:0 0,1px 1px;"></div>
<svg style="left:159px;top:618px" width="16" height="16" viewBox="0 0 16 16"><rect x="0" y="0" width="16" height="16" fill="#3030c8"/><circle cx="8" cy="8" r="5" fill="#2424a8"/><path d="M2.500 6V2.500H6M10 2.500H13.500V6M13.500 10V13.500H10M6 13.500H2.500V10" fill="none" stroke="#fff" stroke-width="1.300"/><path d="M5.500 5.500h4M5.500 5.500v4M6 6L11 11" stroke="#fff" stroke-width="1.800" fill="none"/></svg>
<!-- tray -->
<div class="a sunken" style="left:752px;top:614px;width:130px;height:22px"></div>
<svg style="left:756px;top:616px" width="18" height="18" viewBox="0 0 18 18"><rect x="5.500" y="1.500" width="11" height="11.500" rx="2" fill="#d4d0c8" stroke="#000" stroke-width="1.600"/><rect x="8" y="3.500" width="6" height="7.500" fill="#b8b8b8" stroke="#404040" stroke-width="0.800"/><path d="M7 15.500l1.500 1 1.500-1 1.500 1 1.500-1 1.500 1 1.500-1" fill="none" stroke="#000" stroke-width="1.100"/><path d="M11 13v2" stroke="#000" stroke-width="1.500"/><path d="M0.500 3.500L2 2H5L6 3.500H11.500V12H0.500Z" fill="#f8d848" stroke="#d82818" stroke-width="1.300"/></svg>
<svg style="left:775px;top:616px" width="16" height="18" viewBox="0 0 16 18"><path d="M2 5L8 2L14 5L8 8Z" fill="#fff" stroke="#2060a0" stroke-width="0.800"/><path d="M2 5V12L8 16V8Z" fill="#4890d0" stroke="#104070" stroke-width="0.800"/><path d="M14 5V12L8 16V8Z" fill="#a8d0f0" stroke="#104070" stroke-width="0.800"/><path d="M4 7v6M6 8v6M10 9v5M12 8v5" stroke="#fff" stroke-width="0.800"/><path d="M7 0.500L8 3L9.500 1" stroke="#404040" fill="none"/><rect x="9.500" y="11.500" width="5" height="5" fill="#f8e040" stroke="#806000" stroke-width="0.600" transform="rotate(-20 12 14)"/></svg>
<svg style="left:792px;top:616px" width="18" height="18" viewBox="0 0 18 18"><path d="M0.500 6.500H3.500L9 1.500V16.500L3.500 11.500H0.500Z" fill="#f0f060" stroke="#000" stroke-width="1.100" stroke-linejoin="round"/><path d="M6 5.500V12.500" stroke="#808000" stroke-width="1"/><path d="M11 6l3.500-2.500M11.500 9h4.500M11 12l3.500 2.500" stroke="#808080" stroke-width="1"/></svg>

<span class="t" style="left:19.7px;top:2px;font-size:12px;font-weight:bold;white-space:pre;color:#fff"><span style="letter-spacing:-0.174px">Microsoft </span><span style="letter-spacing:-0.227px">FrontPage </span><span style="letter-spacing:1.078px">- </span><span style="letter-spacing:0.000px">C:&#92;</span><span style="letter-spacing:-0.189px">Documents </span><span style="letter-spacing:-0.218px">and </span><span style="letter-spacing:0.370px">Settings&#92;</span><span style="letter-spacing:0.010px">Valued </span><span style="letter-spacing:0.028px">Customer&#92;</span><span style="letter-spacing:-0.272px">My </span><span style="letter-spacing:0.151px">Documents&#92;</span><span style="letter-spacing:0.095px">My </span><span style="letter-spacing:0.535px">Webs&#92;</span><span style="letter-spacing:-0.278px">myweb</span></span>
<span class="t" style="left:12px;top:24px;font-size:11px;letter-spacing:-0.188px;"><u>F</u>ile</span>
<span class="t" style="left:38px;top:24px;font-size:11px;letter-spacing:-0.242px;"><u>E</u>dit</span>
<span class="t" style="left:66px;top:24px;font-size:11px;letter-spacing:-0.289px;"><u>V</u>iew</span>
<span class="t" style="left:98px;top:24px;font-size:11px;letter-spacing:0.328px;"><u>I</u>nsert</span>
<span class="t" style="left:137px;top:24px;font-size:11px;letter-spacing:-0.060px;">F<u>o</u>rmat</span>
<span class="t" style="left:181px;top:24px;font-size:11px;letter-spacing:-0.037px;"><u>T</u>ools</span>
<span class="t" style="left:216px;top:24px;font-size:11px;letter-spacing:0.138px;">T<u>a</u>ble</span>
<span class="t" style="left:252px;top:24px;font-size:11px;letter-spacing:-0.302px;">F<u>r</u>ames</span>
<span class="t" style="left:297px;top:24px;font-size:11px;letter-spacing:-0.107px;"><u>W</u>indow</span>
<span class="t" style="left:345px;top:24px;font-size:11px;letter-spacing:-0.160px;"><u>H</u>elp</span>
<span class="t" style="left:27.5px;top:105px;font-size:11px;letter-spacing:-0.431px;">Views</span>
<span class="t" style="left:95px;top:105px;font-size:11px;letter-spacing:-0.214px;">Folder List</span>
<span class="t" style="left:30px;top:168px;font-size:11px;letter-spacing:-0.676px;color:#fff">Page</span>
<span class="t" style="left:24px;top:231px;font-size:11px;letter-spacing:-0.170px;color:#fff">Folders</span>
<span class="t" style="left:22px;top:294px;font-size:11px;letter-spacing:0.067px;color:#fff">Reports</span>
<span class="t" style="left:16px;top:357px;font-size:11px;letter-spacing:-0.048px;color:#fff">Navigation</span>
<span class="t" style="left:17px;top:420px;font-size:11px;letter-spacing:-0.186px;color:#fff">Hyperlinks</span>
<span class="t" style="left:28px;top:483px;font-size:11px;letter-spacing:-0.125px;color:#fff">Tasks</span>
<span class="t" style="left:147px;top:142px;font-size:11px;letter-spacing:0.170px;">_private</span>
<span class="t" style="left:147px;top:160px;font-size:11px;letter-spacing:-0.328px;">images</span>
<span class="t" style="left:147px;top:178px;font-size:11px;letter-spacing:0.253px;">favorite.htm</span>
<span class="t" style="left:147px;top:196px;font-size:11px;letter-spacing:0.089px;">index.htm</span>
<span class="t" style="left:147px;top:214px;font-size:11px;letter-spacing:0.169px;">interest.htm</span>
<span class="t" style="left:147px;top:232px;font-size:11px;letter-spacing:0.164px;">myfav3.htm</span>
<span class="t" style="left:147px;top:250px;font-size:11px;letter-spacing:0.175px;">photo.htm</span>
<span class="t" style="left:539px;top:254px;font-size:11px;letter-spacing:-0.344px;">Home Page</span>
<span class="t" style="left:448px;top:322px;font-size:11px;letter-spacing:0.257px;">Interests</span>
<span class="t" style="left:536px;top:322px;font-size:11px;letter-spacing:-0.125px;">Photo Album</span>
<span class="t" style="left:641px;top:322px;font-size:11px;letter-spacing:0.028px;">Favorites</span>
<span class="t" style="left:629px;top:488px;font-size:12px;font-weight:bold;letter-spacing:-0.034px;color:#fff">Navigation</span>
<span class="t" style="left:621px;top:509px;font-size:11px;letter-spacing:0.090px;">100%</span>
<span class="t" style="left:2px;top:595px;font-size:11px;white-space:pre;"><span style="letter-spacing:0.546px">C:&#92;</span><span style="letter-spacing:-0.300px">Documents </span><span style="letter-spacing:-0.155px">and </span><span style="letter-spacing:0.043px">Settings&#92;</span><span style="letter-spacing:-0.314px">Valued </span><span style="letter-spacing:0.006px">Customer&#92;</span><span style="letter-spacing:-0.378px">My </span><span style="letter-spacing:-0.190px">Documents&#92;</span><span style="letter-spacing:-0.278px">My </span><span style="letter-spacing:-0.117px">Webs&#92;</span><span style="letter-spacing:0.099px">myweb&#92;</span><span style="letter-spacing:-0.089px">index.htm</span></span>
<span class="t" style="left:830px;top:595px;font-size:11px;letter-spacing:-1.042px;">CAP</span>
<span class="t" style="left:24px;top:618px;font-size:12px;font-weight:bold;letter-spacing:0.131px;">Start</span>
<span class="t" style="left:177px;top:619px;font-size:12px;font-weight:bold;letter-spacing:-0.134px;">Microsoft FrontPage - ...</span>
<span class="t" style="left:827px;top:619px;font-size:11px;letter-spacing:-0.281px;">1:10 PM</span>
</body></html>
